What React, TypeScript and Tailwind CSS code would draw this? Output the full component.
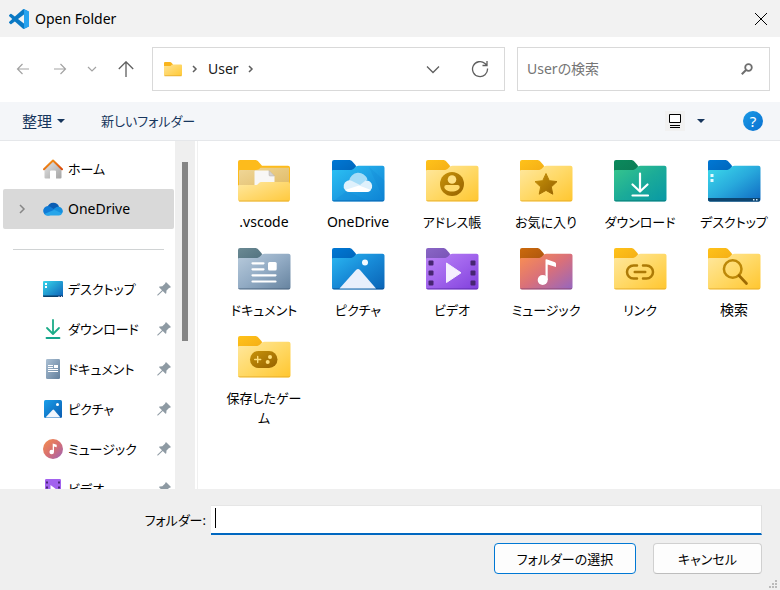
import type { ReactNode } from "react";

const BODY =
  "M1 11q0-1 1-1h17c2 0 3-.6 4.500-2s2-2.300 4-2.300h24q2 0 2 2v31.800q0 2-2 2H3q-2 0-2-2z";

type FolderProps = {
  id: string;
  tab?: [string, string];
  body?: string[];
  edge?: string;
  children?: ReactNode;
};

function Folder({
  id,
  tab = ["#ffc21a", "#f3ac15"],
  body = ["#ffe8a0", "#ffd967", "#ffc62f"],
  edge = "#e3a92a",
  children,
}: FolderProps) {
  return (
    <svg viewBox="0 0 54 42" className="h-[42px] w-[54px]" aria-hidden="true">
      <defs>
        <linearGradient id={id + "-tab"} x1="0" y1="0" x2="1" y2="1">
          <stop offset="0" stopColor={tab[0]} />
          <stop offset="1" stopColor={tab[1]} />
        </linearGradient>
        <linearGradient id={id + "-body"} x1="0" y1="0" x2="1" y2="1">
          {body.map((c, i) => (
            <stop key={c} offset={i / (body.length - 1)} stopColor={c} />
          ))}
        </linearGradient>
        <linearGradient id={id + "-mark"} x1="0" y1="0" x2="1" y2="1">
          <stop offset="0" stopColor="#c8930a" />
          <stop offset="1" stopColor="#966200" />
        </linearGradient>
        <clipPath id={id + "-clip"}>
          <path d={BODY} />
        </clipPath>
      </defs>
      <path
        d="M1 2q0-2 2-2h15c1.500 0 2.300.5 3.300 1.500L25 5.700 24 14H1z"
        fill={`url(#${id}-tab)`}
      />
      <path d={BODY} fill={`url(#${id}-body)`} />
      <g clipPath={`url(#${id}-clip)`}>
        <rect x="1" y="40.500" width="52" height="1" fill={edge} />
        {children}
      </g>
    </svg>
  );
}

const blueTab: [string, string] = ["#0078d4", "#0063b8"];

function VscodeFolder() {
  return (
    <svg viewBox="0 0 54 42" className="h-[42px] w-[54px]" aria-hidden="true">
      <defs>
        <linearGradient id="open-back" x1="0" y1="0" x2="1" y2="1">
          <stop offset="0" stopColor="#f0d798" />
          <stop offset="1" stopColor="#dfb963" />
        </linearGradient>
        <linearGradient id="open-front" x1="0" y1="0" x2="1" y2="1">
          <stop offset="0" stopColor="#ffe8a0" />
          <stop offset="1" stopColor="#ffc93c" />
        </linearGradient>
      </defs>
      <path
        d="M1 2q0-2 2-2h15c1.500 0 2.300.5 3.300 1.500L25 5.700h26q2 0 2 2V30H1z"
        fill="#fdbb1c"
      />
      <path d="M2 11q0-1 1-1h16c2 0 3-.6 4.500-2.200H52V30H2z" fill="url(#open-back)" />
      <path d="M17.500 11.500q0-1 1-1H32l5.500 5.500v12h-20z" fill="#f8f7f6" />
      <path d="M32 10.500V15q0 1 1 1h4.500z" fill="#d6d3d0" stroke="#a9a49c" strokeWidth=".4" />
      <path
        d="M1 26q0-1 1-1h16c2 0 2.500-.4 3.500-1.500S23.500 22 25 22h26q2 0 2 2v15.500q0 2-2 2H3q-2 0-2-2z"
        fill="url(#open-front)"
      />
      <path d="M2 41h50" stroke="#e3a92a" strokeWidth=".8" />
    </svg>
  );
}

type Item = { name: string; size: string; icon: ReactNode };

const KANA = "text-[13px]";
const LATIN = "text-[14px]";

const items: Item[] = [
  { name: ".vscode", size: LATIN, icon: <VscodeFolder /> },
  {
    name: "OneDrive",
    size: LATIN,
    icon: (
      <Folder id="od" tab={blueTab} body={["#2cc3f5", "#1e9fe3", "#0d83d4"]} edge="#0a5ea8">
        <path d="M38 7l16 14v21z" fill="#0b78cc" opacity=".18" />
        <path d="M1 42l15-11 24 11z" fill="#0b78cc" opacity=".18" />
        <path d="M18 21a9.500 9.500 0 0 1 18.500-1.500L29 26z" fill="#a5dcf7" />
        <path d="M18.500 32a5.800 5.800 0 1 1 2.500-11l8 4 5.500-4.500a5.800 5.800 0 1 1 1.500 11.500z" fill="#dff1fc" />
        <path d="M18.500 32q-3 0-4.500-2l14-4.500L40 30q-1.500 2-4 2z" fill="#fff" />
      </Folder>
    ),
  },
  {
    name: "アドレス帳",
    size: KANA,
    icon: (
      <Folder id="contacts">
        <circle cx="27" cy="24" r="12" fill="url(#contacts-mark)" />
        <circle cx="27" cy="19.500" r="4.300" fill="#ffe184" />
        <path d="M21.300 25h11.400q2 0 2 2c0 2.500-3.500 4.500-7.700 4.500S19.300 29.500 19.300 27q0-2 2-2z" fill="#ffda6c" />
      </Folder>
    ),
  },
  {
    name: "お気に入り",
    size: KANA,
    icon: (
      <Folder id="fav">
        <path
          d="M27 13.500l3.300 7.200 7.700.9-5.700 5.300 1.500 7.300-6.800-3.800-6.800 3.800 1.500-7.300-5.700-5.300 7.700-.9z"
          fill="url(#fav-mark)"
          stroke="url(#fav-mark)"
          strokeWidth="1"
          strokeLinejoin="round"
        />
      </Folder>
    ),
  },
  {
    name: "ダウンロード",
    size: KANA,
    icon: (
      <Folder id="dl" tab={["#0b8a5c", "#0c7a55"]} body={["#38c78c", "#1bab98", "#0898a6"]} edge="#08746f">
        <path
          d="M27 13.500v17.500M19.500 24.500l7.500 7 7.500-7M19.500 35.500h15.500"
          stroke="#fff"
          strokeWidth="2.200"
          strokeLinecap="round"
          strokeLinejoin="round"
          fill="none"
        />
      </Folder>
    ),
  },
  {
    name: "デスクトップ",
    size: KANA,
    icon: (
      <Folder id="desk" tab={blueTab} body={["#3ddcec", "#28a9dc", "#0f68c2"]} edge="#0b4470">
        <rect x="1" y="38" width="52" height="4" fill="#0c4570" />
        <path d="M3.500 14h3v3h-3zM3.500 19h3v3h-3z" fill="#e6fbff" />
        <path d="M46 39h1.500v1.500H46zM49 39h1.500v1.500H49z" fill="#d2e8f5" />
      </Folder>
    ),
  },
  {
    name: "ドキュメント",
    size: KANA,
    icon: (
      <Folder id="docs" tab={["#6b8a94", "#4f6f7d"]} body={["#b8cbdc", "#92abc4", "#66839f"]} edge="#48617a">
        <path
          d="M15.500 15.300h11M15.500 21.300h11M15.500 27.300h23M15.500 33.500h23"
          stroke="#fff"
          strokeWidth="2.200"
          strokeLinecap="round"
        />
        <rect x="31" y="14" width="8.700" height="8.500" rx="1.500" fill="#fff" />
      </Folder>
    ),
  },
  {
    name: "ピクチャ",
    size: KANA,
    icon: (
      <Folder id="pics" tab={blueTab} body={["#2bb8f2", "#1789d6", "#0a63b5"]} edge="#084a8c">
        <path d="M8.500 40.500l16.500-18.500q2-2 4 0l16 18.500z" fill="#e8effc" />
        <circle cx="34" cy="14.500" r="3" fill="#f4f9ff" />
      </Folder>
    ),
  },
  {
    name: "ビデオ",
    size: KANA,
    icon: (
      <Folder id="vid" tab={["#8a66c6", "#7651b4"]} body={["#bb84f6", "#a063ec", "#8040dc"]} edge="#5b2ba8">
        <g fill="#472672">
          {[12.5, 22.5, 32.5].map((y) => (
            <g key={y}>
              <rect x="3.500" y={y} width="5" height="5" rx="1" />
              <rect x="45.500" y={y} width="5" height="5" rx="1" />
            </g>
          ))}
        </g>
        <path d="M21.500 15v19.500l14.500-9.700z" fill="#f5effe" stroke="#f5effe" strokeLinejoin="round" />
      </Folder>
    ),
  },
  {
    name: "ミュージック",
    size: KANA,
    icon: (
      <Folder id="music" tab={["#cc6a0c", "#a9540f"]} body={["#fb9050", "#d9707a", "#9566c0"]} edge="#87466f">
        <circle cx="23.700" cy="32" r="5" fill="#fff" />
        <path d="M26.500 12q0-1 1-.8l8.500 3q1 .5 1 1.500v3.300l-8.300-2.500V32h-2.200z" fill="#fff" />
      </Folder>
    ),
  },
  {
    name: "リンク",
    size: KANA,
    icon: (
      <Folder id="links">
        <path
          d="M24 17.500h-3.500a6.500 6.500 0 0 0 0 13H24M30 17.500h3.500a6.500 6.500 0 0 1 0 13H30"
          stroke="#ad7a06"
          strokeWidth="2.500"
          strokeLinecap="round"
          fill="none"
        />
        <rect x="20.500" y="22.800" width="13" height="2.500" rx="1.200" fill="#ad7a06" />
      </Folder>
    ),
  },
  {
    name: "検索",
    size: LATIN,
    icon: (
      <Folder id="search">
        <circle cx="25.700" cy="21" r="8.800" fill="none" stroke="#bd8808" strokeWidth="2.500" />
        <path d="M32 27.500l7.500 8" stroke="#9f6b02" strokeWidth="2.700" strokeLinecap="round" />
      </Folder>
    ),
  },
  {
    name: "保存したゲーム",
    size: KANA,
    icon: (
      <Folder id="games">
        <rect x="13" y="15" width="27.500" height="17" rx="8.500" fill="url(#games-mark)" />
        <path d="M20.700 20.500v6M17.700 23.500h6" stroke="#ffdf7a" strokeWidth="1.400" strokeLinecap="round" />
        <circle cx="33" cy="21" r="2" fill="#ffdf7a" />
        <circle cx="30.700" cy="26" r="2" fill="#ffdf7a" />
      </Folder>
    ),
  },
];

function HomeIcon() {
  return (
    <svg viewBox="0 0 20 20" className="size-5" aria-hidden="true">
      <defs>
        <linearGradient id="home-wall" x1="0" y1="0" x2="1" y2="1">
          <stop offset="0" stopColor="#e4e4e4" />
          <stop offset="1" stopColor="#a4a4a4" />
        </linearGradient>
        <linearGradient id="home-roof" x1="0" y1="0" x2="1" y2="1">
          <stop offset="0" stopColor="#f7a01c" />
          <stop offset="1" stopColor="#d9480a" />
        </linearGradient>
      </defs>
      <path d="M10 2.500L1.500 10.500V18.500q0 1 1 1H7v-7q0-1 1-1h4q1 0 1 1v7h4.500q1 0 1-1v-8z" fill="url(#home-wall)" />
      <path d="M1 10.200L10 1.500l9 8.700" stroke="url(#home-roof)" strokeWidth="2" fill="none" strokeLinecap="round" strokeLinejoin="round" />
    </svg>
  );
}

function OneDriveIcon() {
  return (
    <svg viewBox="0 0 20 20" className="size-5" aria-hidden="true">
      <path d="M4.500 8a6.200 6.200 0 0 1 11.500-.5L12 13z" fill="#0a5db3" />
      <path d="M4.500 16.500A4.700 4.700 0 1 1 7 7.600L15 13l-9 3.500z" fill="#0f7bd6" />
      <path d="M10 10.500l3.500-2.500a4.700 4.700 0 0 1 6.300 5q-.5 1.500-2 2z" fill="#1590df" />
      <path d="M1.300 15l10-4.200 7.900 3.700q-1 2-3.200 2H4.500q-2 0-3.200-1.500z" fill="#27a5ea" />
    </svg>
  );
}

function DesktopIcon() {
  return (
    <svg viewBox="0 0 20 20" className="size-5" aria-hidden="true">
      <defs>
        <linearGradient id="desk-small" x1="0" y1="0" x2="1" y2="1">
          <stop offset="0" stopColor="#37d6ea" />
          <stop offset="1" stopColor="#0c5fb8" />
        </linearGradient>
      </defs>
      <rect x="0" y="2" width="20" height="16" rx="1" fill="url(#desk-small)" />
      <path d="M0 16.500h20V17q0 1-1 1H1q-1 0-1-1z" fill="#0a3f6b" />
      <path d="M2 4h2v2H2zM2 7h2v2H2z" fill="#fff" />
      <path d="M15.500 17h1v1h-1zM18 17h1v1h-1z" fill="#dce" />
    </svg>
  );
}

function DownloadIcon() {
  return (
    <svg viewBox="0 0 20 20" className="size-5" aria-hidden="true">
      <path d="M10 1v13M4 9l6 6 6-6" stroke="#1cac88" strokeWidth="1.800" fill="none" strokeLinecap="round" strokeLinejoin="round" />
      <path d="M3.500 19h13" stroke="#14a58c" strokeWidth="1.800" strokeLinecap="round" />
    </svg>
  );
}

function DocumentIcon() {
  return (
    <svg viewBox="0 0 20 20" className="size-5" aria-hidden="true">
      <defs>
        <linearGradient id="doc-small" x1="0" y1="0" x2="1" y2="1">
          <stop offset="0" stopColor="#abc0d4" />
          <stop offset="1" stopColor="#627f9c" />
        </linearGradient>
      </defs>
      <rect x="3" y="0" width="14" height="20" rx="1.200" fill="url(#doc-small)" />
      <path d="M5 6.500h5M5 8.500h5M5 10.500h10M5 12.500h10" stroke="#fff" />
      <rect x="11" y="6" width="4" height="3" fill="#fff" />
    </svg>
  );
}

function PictureIcon() {
  return (
    <svg viewBox="0 0 20 20" className="size-5" aria-hidden="true">
      <defs>
        <linearGradient id="pic-small" x1="0" y1="0" x2="1" y2="1">
          <stop offset="0" stopColor="#1a9fea" />
          <stop offset="1" stopColor="#0a5bb0" />
        </linearGradient>
      </defs>
      <rect x="1" y="1" width="18" height="18" rx="1.500" fill="url(#pic-small)" />
      <path d="M2.500 18.500l7-7.500q.8-.8 1.600 0l6.400 7.500z" fill="#f1f6fd" />
      <circle cx="14.500" cy="5.500" r="1.500" fill="#fff" />
    </svg>
  );
}

function MusicIcon() {
  return (
    <svg viewBox="0 0 20 20" className="size-5" aria-hidden="true">
      <defs>
        <linearGradient id="music-small" x1="0" y1="0" x2="1" y2="1">
          <stop offset="0" stopColor="#f5904e" />
          <stop offset=".5" stopColor="#d9706f" />
          <stop offset="1" stopColor="#9a62bb" />
        </linearGradient>
      </defs>
      <circle cx="10" cy="10" r="10" fill="url(#music-small)" />
      <circle cx="8.700" cy="13" r="2.300" fill="#fff" />
      <path d="M9.700 4.500l4 1.300v2.500L11 7.500V13H9.700z" fill="#fff" />
    </svg>
  );
}

function VideoIcon() {
  return (
    <svg viewBox="0 0 20 20" className="size-5" aria-hidden="true">
      <rect x="2" y="0" width="16" height="20" rx="1.200" fill="#a262ee" />
      <path d="M3 2.500h2v2H3zM3 7.500h2v2H3zM3 12.500h2v2H3zM15 2.500h2v2h-2zM15 7.500h2v2h-2zM15 12.500h2v2h-2z" fill="#4a2777" />
      <path d="M7.500 6v9l6-4.500z" fill="#fff" />
    </svg>
  );
}

function Pin() {
  return (
    <svg viewBox="0 0 14 14" className="size-[14px] shrink-0" aria-hidden="true">
      <path
        d="M8.500.5q.5-.5 1 0l4 4q.5.5 0 1l-1.500.5L9.500 8.500 9.300 11q-.2 1-1 .5L5.800 9 1 13.500H.3v-.8L5 8.200 2.300 5.600q-.6-.8.4-1L5.300 4.300 8 1.800z"
        fill="#8e9aa3"
      />
    </svg>
  );
}

const pinned = [
  { name: "デスクトップ", icon: <DesktopIcon /> },
  { name: "ダウンロード", icon: <DownloadIcon /> },
  { name: "ドキュメント", icon: <DocumentIcon /> },
  { name: "ピクチャ", icon: <PictureIcon /> },
  { name: "ミュージック", icon: <MusicIcon /> },
  { name: "ビデオ", icon: <VideoIcon /> },
];

function Chevron({ className, d }: { className: string; d: string }) {
  return (
    <svg viewBox="0 0 14 14" className={className} fill="none" stroke="currentColor" aria-hidden="true">
      <path d={d} />
    </svg>
  );
}

function Caret() {
  return (
    <svg viewBox="0 0 8 4" className="h-1 w-2" aria-hidden="true">
      <path d="M0 0h8L4 4z" fill="#17365d" />
    </svg>
  );
}

export default function App() {
  return (
    <div className="flex h-screen flex-col overflow-hidden bg-white font-['Noto_Sans','Noto_Sans_CJK_JP',sans-serif] text-[14px] leading-5 text-black [font-feature-settings:'palt']">
      <header className="flex h-[37px] shrink-0 items-center gap-[6px] bg-[#f2f2f2] pr-3 pl-[9px]">
        <svg viewBox="0 0 24 24" className="size-5" aria-hidden="true">
          <path
            d="M23.150 2.587L18.210.21a1.494 1.494 0 0 0-1.705.29l-9.460 8.630-4.120-3.128a.999.999 0 0 0-1.276.057L.327 7.261A1 1 0 0 0 .326 8.740L3.899 12 .326 15.260a1 1 0 0 0 .001 1.479L1.650 17.940a.999.999 0 0 0 1.276.057l4.120-3.128 9.460 8.630a1.492 1.492 0 0 0 1.704.29l4.942-2.377A1.500 1.500 0 0 0 24 20.060V3.939a1.500 1.500 0 0 0-.85-1.352zm-5.146 14.861L10.826 12l7.178-5.448z"
            fill="#0a79c4"
          />
          <path d="M17.300.1q.5-.1.910.110l4.940 2.377q.85.5.85 1.352V20.060q0 .9-.85 1.350l-4.940 2.380q-.4.200-.91.100l.7-1V1z" fill="#27a3ef" />
        </svg>
        <h1 className="flex-1">Open Folder</h1>
        <button type="button" aria-label="閉じる" className="p-0">
          <Chevron className="size-[14px]" d="M1 1l12 12M13 1L1 13" />
        </button>
      </header>

      <nav className="flex h-[65px] shrink-0 items-center gap-3 pr-[10px] pb-[2px] pl-4 text-[#5f5f5f]">
        <div className="flex w-[124px] shrink-0 items-center justify-between pr-[6px]">
          <button type="button" aria-label="戻る" className="text-[#a3a3a3]">
            <Chevron className="size-[14px] stroke-[1.200]" d="M13 7H1.500M6.500 2l-5 5 5 5" />
          </button>
          <button type="button" aria-label="進む" className="ml-1 text-[#a3a3a3]">
            <Chevron className="size-[14px] stroke-[1.200]" d="M1 7h11.500M7.500 2l5 5-5 5" />
          </button>
          <button type="button" aria-label="最近表示した場所" className="text-[#a3a3a3]">
            <Chevron className="size-[14px] stroke-[1.200]" d="M3 5l4 4 4-4" />
          </button>
          <button type="button" aria-label="上へ" className="text-[#5f5f5f]">
            <svg viewBox="0 0 16 16" className="size-4" fill="none" stroke="currentColor" strokeWidth="1.300" aria-hidden="true">
              <path d="M8 16V1M.8 8L8 .8 15.200 8" />
            </svg>
          </button>
        </div>
        <div className="flex h-11 flex-1 items-center border border-[#d9d9d9] pr-[15px] pl-[10px]">
          <svg viewBox="0 0 20 16" className="h-4 w-5" aria-hidden="true">
            <defs>
              <linearGradient id="crumb" x1="0" y1="0" x2="1" y2="1">
                <stop offset="0" stopColor="#ffe394" />
                <stop offset="1" stopColor="#ffc935" />
              </linearGradient>
            </defs>
            <path d="M1 2q0-1 1-1h5q1 0 1.500.7L10 3.500V6H1z" fill="#f9b41c" />
            <path d="M1 5h6.500L9 3.500h9q1 0 1 1V14q0 1-1 1H2q-1 0-1-1z" fill="url(#crumb)" />
            <path d="M1.500 14.800h17" stroke="#e0a52a" strokeWidth=".7" />
          </svg>
          <Chevron className="ml-1 size-[14px] stroke-[1.500]" d="M6 4l3 3-3 3" />
          <span className="ml-[7px] text-[#1a1a1a]">User</span>
          <Chevron className="ml-1 size-[14px] stroke-[1.500]" d="M6 4l3 3-3 3" />
          <span className="flex-1" />
          <button type="button" aria-label="以前の場所">
            <Chevron className="size-[14px] stroke-[1.300]" d="M1 4.500l6 6 6-6" />
          </button>
          <button type="button" aria-label="最新の情報に更新" className="ml-[31px]">
            <svg viewBox="0 0 18 18" className="size-[18px]" fill="none" stroke="currentColor" strokeWidth="1.300" aria-hidden="true">
              <path d="M16.500 8.500A7.500 7.500 0 1 1 14 3.500L16 5.300M16 1v4.500h-4.500" />
            </svg>
          </button>
        </div>
        <label className="flex h-11 w-[253px] items-center border border-[#d9d9d9] pr-4 pl-[9px]">
          <input
            type="search"
            aria-label="Userの検索"
            placeholder="Userの検索"
            className="min-w-0 flex-1 outline-none placeholder:text-[#757575]"
          />
          <svg viewBox="0 0 12 12" className="size-3" fill="none" stroke="#6e6e6e" aria-hidden="true">
            <circle cx="7.500" cy="4.500" r="3.300" strokeWidth="1.800" />
            <path d="M5 7L.8 11.200" strokeWidth="2" />
          </svg>
        </label>
      </nav>

      <div className="flex h-[39px] shrink-0 items-center border-b border-[#e5e7ea] bg-[#f4f6f9] pr-[17px] pl-[22px] text-[#17365d]">
        <button type="button" className="flex items-center gap-[5px] text-[15px]">
          整理 <Caret />
        </button>
        <button type="button" className="ml-9 text-[13px]">
          新しいフォルダー
        </button>
        <span className="flex-1" />
        <button type="button" aria-label="表示" className="flex size-5 items-center justify-center bg-[#f1f1f1]">
          <svg viewBox="0 0 12 14" className="h-[14px] w-3" stroke="#000" fill="none" aria-hidden="true">
            <path d="M.5.5h11v8H.5z" fill="#fff" />
            <path d="M1 11.500h10M1 13.500h10" />
          </svg>
        </button>
        <button type="button" aria-label="その他の表示オプション" className="ml-3">
          <Caret />
        </button>
        <button
          type="button"
          aria-label="ヘルプ"
          className="ml-[38px] flex size-5 items-center justify-center rounded-full bg-linear-to-br from-[#1c9be6] to-[#0a6fd0] text-[15px] text-white"
        >
          ?
        </button>
      </div>

      <main className="flex min-h-0 flex-1">
        <aside className="flex w-[198px] shrink-0 border-r border-[#f0f0f0]">
          <div className="min-w-0 flex-1 overflow-hidden pt-2 pr-[1px] pl-[3px]">
            <button type="button" className="flex h-10 w-full items-center gap-[5px] pl-10 text-[13px]">
              <HomeIcon /> ホーム
            </button>
            <button
              type="button"
              className="flex h-10 w-full items-center gap-[5px] rounded-xs bg-[#d9d9d9] pl-3"
            >
              <Chevron className="mr-[9px] size-[14px] stroke-[1.500] text-[#868686]" d="M5 3l4 4-4 4" />
              <OneDriveIcon /> OneDrive
            </button>
            <div className="flex h-10 items-center pr-[10px] pl-[10px]">
              <hr className="flex-1 border-[#d0d3d4]" />
            </div>
            <ul>
              {pinned.map((p) => (
                <li key={p.name}>
                  <button type="button" className="flex h-10 w-full items-center gap-[5px] pr-[3px] pl-10 text-left text-[13px]">
                    {p.icon}
                    <span className="flex-1 whitespace-nowrap">{p.name}</span>
                    <Pin />
                  </button>
                </li>
              ))}
            </ul>
          </div>
          <div className="flex w-5 flex-col items-center bg-[#efefef] pt-[21px]">
            <div className="h-[179px] w-[6px] bg-[#858585]" />
          </div>
          <div className="w-[2px]" />
        </aside>

        <ul className="grid flex-1 grid-cols-[repeat(auto-fill,76px)] content-start gap-x-[18px] gap-y-4 overflow-hidden pt-[19px] pl-7">
          {items.map((item) => (
            <li key={item.name} className="h-[72px]">
              <button type="button" className="flex w-full flex-col items-center gap-[10px]">
                {item.icon}
                <span className={`${item.size} leading-5 break-all`}>{item.name}</span>
              </button>
            </li>
          ))}
        </ul>
      </main>

      <footer className="relative flex shrink-0 flex-col gap-2 bg-[#efefef] pt-4 pr-[18px] pb-4 pl-[143px]">
        <div className="flex items-center gap-[5px]">
          <label htmlFor="folder" className="w-[63px] text-right text-[13px] whitespace-nowrap">
            フォルダー:
          </label>
          <div className="relative flex-1">
            <input
              id="folder"
              type="text"
              className="block h-[30px] w-full border-t border-r border-b-2 border-t-[#e6e6e6] border-r-[#e0e0e0] border-b-[#0067c0] bg-white px-1 caret-transparent outline-none"
            />
            <span className="absolute top-[3px] left-1 h-5 w-px bg-black" aria-hidden="true" />
          </div>
        </div>
        <div className="flex justify-end gap-[17px]">
          <button type="button" className="h-[31px] w-[142px] rounded-[4px] border border-[#0078d4] bg-[#fdfdfd] text-[13px]">
            フォルダーの選択
          </button>
          <button type="button" className="h-[31px] w-[109px] rounded-[4px] border border-[#d0d0d0] border-b-[#bdbdbd] bg-[#fdfdfd] text-[13px]">
            キャンセル
          </button>
        </div>
        <svg viewBox="0 0 8 8" className="absolute right-[3px] bottom-[2px] size-2" fill="#bababa" aria-hidden="true">
          <path d="M6 0h2v2H6zM3 3h2v2H3zM6 3h2v2H6zM0 6h2v2H0zM3 6h2v2H3zM6 6h2v2H6z" />
        </svg>
      </footer>
    </div>
  );
}
